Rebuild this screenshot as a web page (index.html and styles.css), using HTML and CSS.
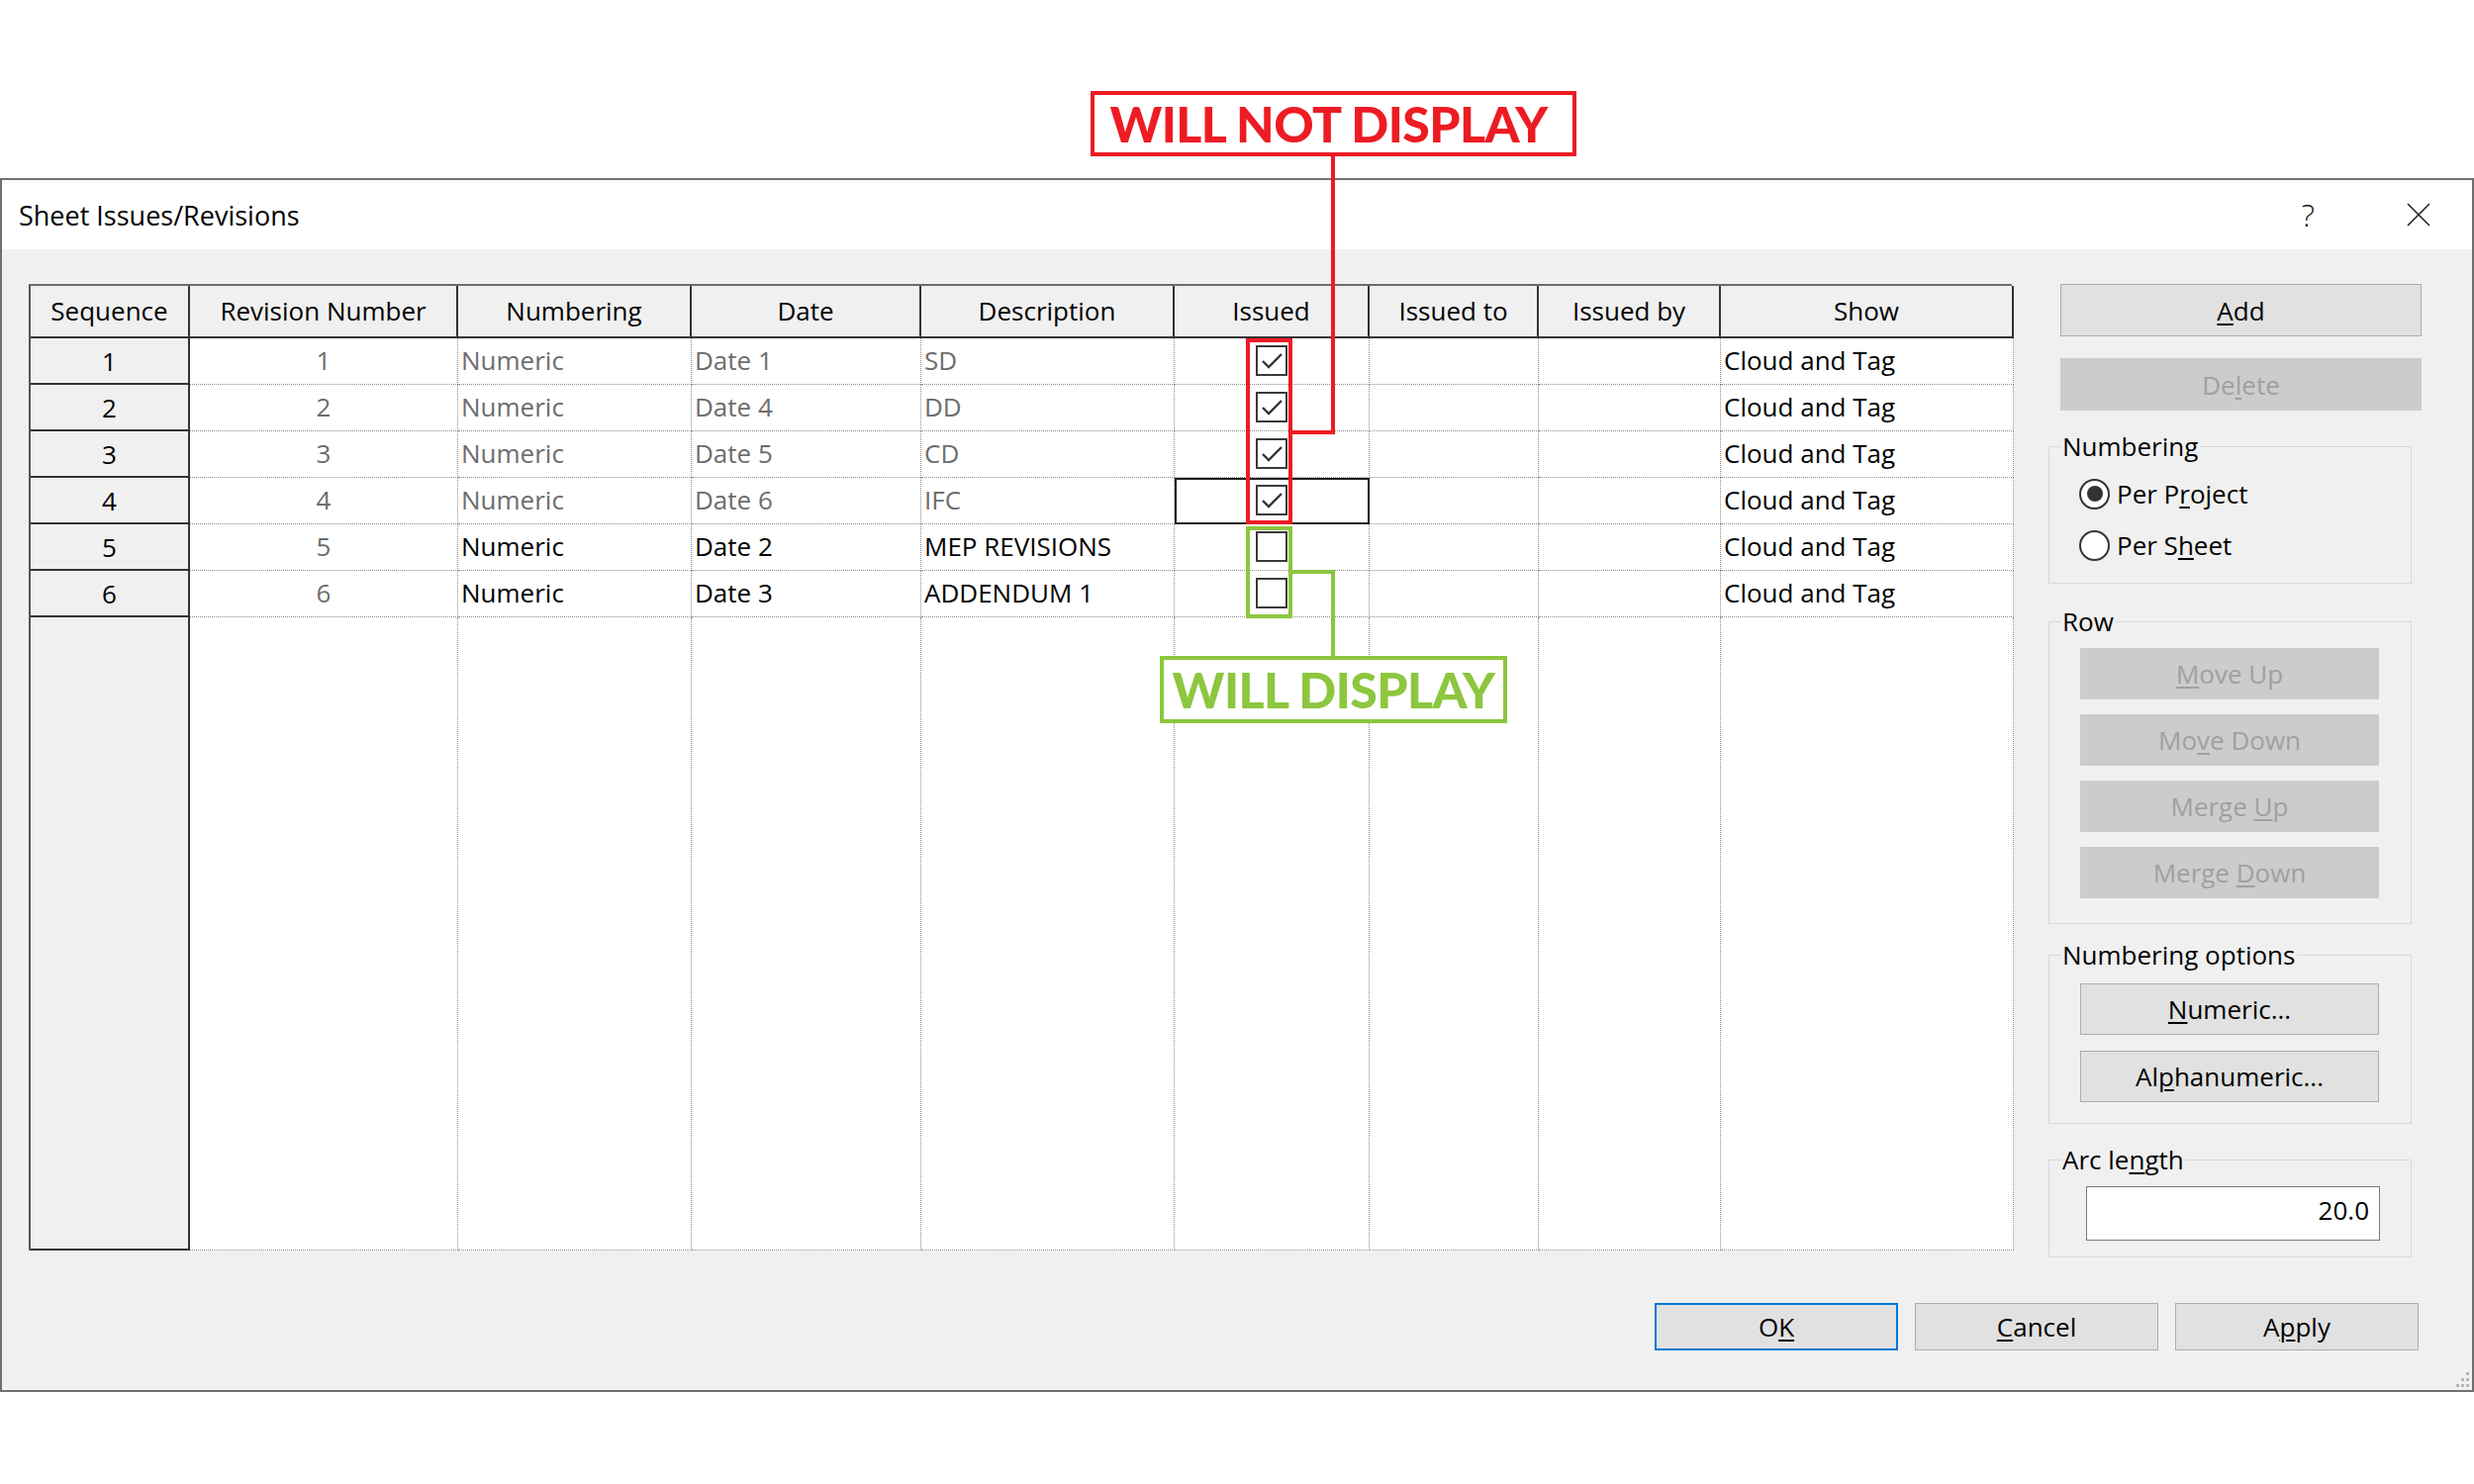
FILE: index.html
```html
<!DOCTYPE html>
<html>
<head>
<meta charset="utf-8">
<title>Sheet Issues/Revisions</title>
<link rel="stylesheet" href="styles.css">
</head>
<body>
<div class="dialog">
  <div class="titlebar">
    <div class="title">Sheet Issues/Revisions</div>
    <div class="help">?</div>
    <div class="close"><svg width="24" height="24" viewBox="0 0 24 24"><path d="M1 1 L23 23 M23 1 L1 23" stroke="#222" stroke-width="1.6" fill="none"/></svg></div>
  </div>
  <div class="content">
    <div class="grid">
      <div class="th">Sequence</div>
      <div class="th">Revision Number</div>
      <div class="th">Numbering</div>
      <div class="th">Date</div>
      <div class="th">Description</div>
      <div class="th">Issued</div>
      <div class="th">Issued to</div>
      <div class="th">Issued by</div>
      <div class="th">Show</div>

      <div class="seq">1</div>
      <div class="td center dim">1</div>
      <div class="td dim">Numeric</div>
      <div class="td dim">Date 1</div>
      <div class="td dim">SD</div>
      <div class="td center"><span class="cb"><svg width="28" height="28" viewBox="0 0 28 28"><polyline points="5,15 11,21 24,8" fill="none" stroke="#333" stroke-width="2.4"/></svg></span></div>
      <div class="td"></div>
      <div class="td"></div>
      <div class="td">Cloud and Tag</div>

      <div class="seq">2</div>
      <div class="td center dim">2</div>
      <div class="td dim">Numeric</div>
      <div class="td dim">Date 4</div>
      <div class="td dim">DD</div>
      <div class="td center"><span class="cb"><svg width="28" height="28" viewBox="0 0 28 28"><polyline points="5,15 11,21 24,8" fill="none" stroke="#333" stroke-width="2.4"/></svg></span></div>
      <div class="td"></div>
      <div class="td"></div>
      <div class="td">Cloud and Tag</div>

      <div class="seq">3</div>
      <div class="td center dim">3</div>
      <div class="td dim">Numeric</div>
      <div class="td dim">Date 5</div>
      <div class="td dim">CD</div>
      <div class="td center"><span class="cb"><svg width="28" height="28" viewBox="0 0 28 28"><polyline points="5,15 11,21 24,8" fill="none" stroke="#333" stroke-width="2.4"/></svg></span></div>
      <div class="td"></div>
      <div class="td"></div>
      <div class="td">Cloud and Tag</div>

      <div class="seq">4</div>
      <div class="td center dim">4</div>
      <div class="td dim">Numeric</div>
      <div class="td dim">Date 6</div>
      <div class="td dim">IFC</div>
      <div class="td center focus"><span class="cb"><svg width="28" height="28" viewBox="0 0 28 28"><polyline points="5,15 11,21 24,8" fill="none" stroke="#333" stroke-width="2.4"/></svg></span></div>
      <div class="td"></div>
      <div class="td"></div>
      <div class="td">Cloud and Tag</div>

      <div class="seq">5</div>
      <div class="td center dim">5</div>
      <div class="td">Numeric</div>
      <div class="td">Date 2</div>
      <div class="td">MEP REVISIONS</div>
      <div class="td center"><span class="cb"></span></div>
      <div class="td"></div>
      <div class="td"></div>
      <div class="td">Cloud and Tag</div>

      <div class="seq">6</div>
      <div class="td center dim">6</div>
      <div class="td">Numeric</div>
      <div class="td">Date 3</div>
      <div class="td">ADDENDUM 1</div>
      <div class="td center"><span class="cb"></span></div>
      <div class="td"></div>
      <div class="td"></div>
      <div class="td">Cloud and Tag</div>

      <div class="seq"></div>
      <div class="td"></div>
      <div class="td"></div>
      <div class="td"></div>
      <div class="td"></div>
      <div class="td"></div>
      <div class="td"></div>
      <div class="td"></div>
      <div class="td"></div>
    </div>

    <div class="panel">
      <div class="btn wide"><span><u>A</u>dd</span></div>
      <div class="btn wide disabled del"><span>De<u>l</u>ete</span></div>

      <fieldset class="group g-num">
        <legend>Numbering</legend>
        <div class="radio"><span class="circle on"></span><span>Per P<u>r</u>oject</span></div>
        <div class="radio r2"><span class="circle"></span><span>Per S<u>h</u>eet</span></div>
      </fieldset>

      <fieldset class="group g-row">
        <legend>Row</legend>
        <div class="btn sub disabled"><span><u>M</u>ove Up</span></div>
        <div class="btn sub disabled"><span>Mo<u>v</u>e Down</span></div>
        <div class="btn sub disabled"><span>Merge <u>U</u>p</span></div>
        <div class="btn sub disabled"><span>Merge <u>D</u>own</span></div>
      </fieldset>

      <fieldset class="group g-opt">
        <legend>Numbering options</legend>
        <div class="btn sub"><span><u>N</u>umeric...</span></div>
        <div class="btn sub"><span>Al<u>p</u>hanumeric...</span></div>
      </fieldset>

      <fieldset class="group g-arc">
        <legend>Arc le<u>n</u>gth</legend>
        <div class="input">20.0</div>
      </fieldset>
    </div>
  </div>
  <div class="footer">
    <div class="btn foot ok"><span>O<u>K</u></span></div>
    <div class="btn foot"><span><u>C</u>ancel</span></div>
    <div class="btn foot"><span>A<u>p</u>ply</span></div>
  </div>
  <svg class="grip" width="18" height="18" viewBox="0 0 18 18">
    <rect x="14" y="2" width="3" height="3" fill="#b5b5b5"/>
    <rect x="9" y="8" width="3" height="3" fill="#b5b5b5"/><rect x="14" y="8" width="3" height="3" fill="#b5b5b5"/>
    <rect x="4" y="14" width="3" height="3" fill="#b5b5b5"/><rect x="9" y="14" width="3" height="3" fill="#b5b5b5"/><rect x="14" y="14" width="3" height="3" fill="#b5b5b5"/>
  </svg>
</div>

<div class="note red label-red">WILL NOT DISPLAY</div>
<div class="line red-bg red-v"></div>
<div class="line red-bg red-h"></div>
<div class="hl red-box"></div>

<div class="hl green-box"></div>
<div class="line green-bg green-h"></div>
<div class="line green-bg green-v"></div>
<div class="note green label-green">WILL DISPLAY</div>
</body>
</html>
```

FILE: styles.css
```css
* { box-sizing: border-box; }
html, body { margin: 0; padding: 0; }
body {
  width: 2500px;
  height: 1500px;
  background: #ffffff;
  font-family: "Open Sans", "Noto Sans", "DejaVu Sans", sans-serif;
  color: #000;
  position: relative;
  overflow: hidden;
}

.dialog {
  margin-top: 180px;
  width: 2500px;
  height: 1227px;
  border: 2px solid #707070;
  background: #f0f0f0;
  display: flex;
  flex-direction: column;
  position: relative;
}

.titlebar {
  height: 70px;
  flex: none;
  background: #ffffff;
  display: flex;
  align-items: center;
  padding-left: 17px;
  padding-right: 42px;
}
.title { flex: 1; font-size: 27px; }
.help { font-size: 32px; font-weight: 300; color: #222; margin-right: 93px; line-height: 1; }
.close { width: 24px; height: 24px; display: flex; }

.content {
  display: flex;
  align-items: flex-start;
  height: 1012px;
  padding: 35px 0 0 27px;
  gap: 37px;
  flex: none;
}

.grid {
  width: 2004px;
  height: 977px;
  display: grid;
  grid-template-columns: 161px 271px 236px 232px 256px 197px 171px 184px 296px;
  grid-template-rows: 53px repeat(6, 47px) 1fr;
  border-top: 2px solid #6a6a6a;
  border-left: 2px solid #555;
  background: #fff;
  font-size: 26px;
}
.th {
  background: #f0f0f0;
  border-right: 2px solid #333;
  border-bottom: 2px solid #333;
  display: flex;
  align-items: center;
  justify-content: center;
  padding-bottom: 2px;
}
.seq {
  background: #f0f0f0;
  border-right: 2px solid #333;
  border-bottom: 2px solid #333;
  display: flex;
  align-items: center;
  justify-content: center;
}
.td {
  background: #fff;
  border-right: 1px dotted #8c8c8c;
  border-bottom: 1px dotted #8c8c8c;
  display: flex;
  align-items: center;
  padding-left: 3px;
  padding-bottom: 2px;
  white-space: nowrap;
}
.td.center { justify-content: center; padding-left: 0; }
.dim { color: #6d6d6d; }
.focus { outline: 2px solid #1e1e1e; outline-offset: -2px; }

.cb {
  width: 32px;
  height: 31px;
  border: 2px solid #3a3a3a;
  background: #fff;
  display: flex;
  align-items: center;
  justify-content: center;
}

.panel {
  width: 377px;
  display: flex;
  flex-direction: column;
  font-size: 26px;
}

.btn {
  background: #e1e1e1;
  border: 1px solid #adadad;
  display: flex;
  align-items: center;
  justify-content: center;
  font-size: 26px;
  white-space: nowrap;
}
.btn u, legend u, .radio u { text-decoration-thickness: 2px; text-underline-offset: 3px; }
.btn.disabled { background: #cccccc; border-color: #cccccc; color: #a0a0a0; }
.btn.wide { width: 365px; height: 53px; margin-left: 12px; }
.btn.del { margin-top: 22px; }

.group {
  margin: 0;
  padding: 0;
  width: 367px;
  min-width: 0;
  border: 1px solid #d8d8d8;
}
.group legend {
  font-size: 26px;
  line-height: 36px;
  padding: 0 2px;
  margin-left: 11px;
}
.g-num { margin-top: 18px; padding: 10px 0 18px 0; }
.g-row { margin-top: 20px; padding: 9px 0 25px 0; display: flex; flex-direction: column; gap: 15px; }
.g-opt { margin-top: 13px; padding: 11px 0 21px 0; display: flex; flex-direction: column; gap: 16px; }
.g-arc { margin-top: 18px; padding: 9px 0 16px 0; }

.btn.sub { width: 302px; height: 52px; margin-left: 31px; }

.radio { height: 40px; display: flex; align-items: center; gap: 7px; padding-left: 30px; }
.radio.r2 { margin-top: 12px; }
.circle {
  width: 31px;
  height: 31px;
  border-radius: 50%;
  border: 2px solid #333;
  background: #fff;
  display: flex;
  align-items: center;
  justify-content: center;
}
.circle.on::after {
  content: "";
  width: 16px;
  height: 16px;
  border-radius: 50%;
  background: #333;
}

.input {
  width: 297px;
  height: 55px;
  margin-left: 37px;
  background: #fff;
  border: 1px solid #7a7a7a;
  display: flex;
  align-items: center;
  justify-content: flex-end;
  padding-right: 10px;
  padding-bottom: 8px;
  font-size: 26px;
}

.footer {
  display: flex;
  justify-content: flex-end;
  gap: 17px;
  margin-top: 53px;
  padding-right: 54px;
}
.btn.foot { width: 246px; height: 48px; }
.btn.ok { border: 2px solid #0078d7; }

.grip { position: absolute; right: 2px; bottom: 2px; }

/* annotations */
.note {
  position: absolute;
  display: flex;
  align-items: center;
  justify-content: center;
  font-family: "Lato", "Open Sans", sans-serif;
  font-weight: 900;
  font-size: 50px;
  letter-spacing: -0.6px;
  background: #fff;
  border: 4px solid;
  line-height: 1;
  white-space: nowrap;
}
.red { color: #ed1c24; border-color: #ed1c24; }
.green { color: #8dc63f; border-color: #8dc63f; }
.label-red { left: 1102px; top: 92px; width: 491px; height: 66px; padding-right: 10px; }
.label-green { left: 1172px; top: 663px; width: 351px; height: 68px; }

.line { position: absolute; }
.red-bg { background: #ed1c24; }
.green-bg { background: #8dc63f; }
.red-v { left: 1345px; top: 158px; width: 4px; height: 281px; }
.red-h { left: 1303px; top: 435px; width: 46px; height: 4px; }
.green-h { left: 1303px; top: 576px; width: 46px; height: 4px; }
.green-v { left: 1345px; top: 576px; width: 4px; height: 88px; }

.hl { position: absolute; border: 4px solid; }
.red-box { left: 1259px; top: 342px; width: 47px; height: 188px; border-color: #ed1c24; }
.green-box { left: 1259px; top: 532px; width: 47px; height: 93px; border-color: #8dc63f; }
```
